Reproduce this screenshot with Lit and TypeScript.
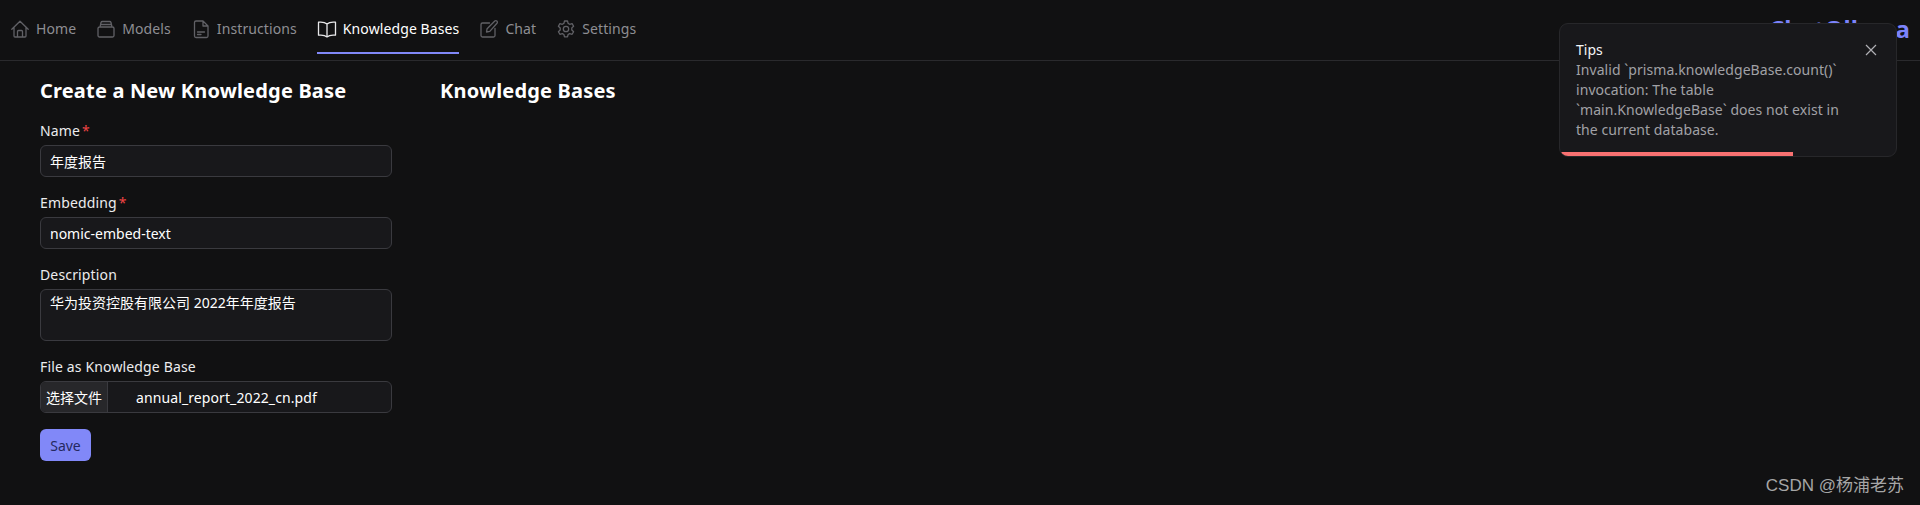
import { LitElement, html, css, svg } from "lit";
import { customElement } from "lit/decorators.js";

const icons: Record<string, unknown> = {
  home: svg`<path d="M1.800 10.200 10 2.200l8.200 8M4 8.300V17a1 1 0 0 0 1 1h10a1 1 0 0 0 1-1V8.300M7.500 18v-5.500a1 1 0 0 1 1-1h3a1 1 0 0 1 1 1V18" />`,
  models: svg`<path d="M3.500 8h13A1.500 1.500 0 0 1 18 9.500v7a1.500 1.500 0 0 1-1.500 1.500h-13A1.500 1.500 0 0 1 2 16.500v-7A1.500 1.500 0 0 1 3.500 8ZM4 8l1-4.500A1.500 1.500 0 0 1 6.500 2.500h7A1.500 1.500 0 0 1 15 3.500L16 8M4.500 5.500h11" />`,
  instructions: svg`<path d="M5 2h7l5 5v10a1.500 1.500 0 0 1-1.500 1.500h-10.500A1.500 1.500 0 0 1 3.500 17V3.500A1.500 1.500 0 0 1 5 2ZM12 2v5h5M6.500 13h7M6.500 15.500h3.500" />`,
  kb: svg`<path d="M10 5C8.300 3.500 5 2.800 1.500 3.200v13c3.500-.4 6.800.2 8.500 1.700 1.700-1.500 5-2.100 8.500-1.700v-13C15 2.800 11.700 3.500 10 5ZM10 5v12.900" />`,
  chat: svg`<path d="M10.500 4H3.500A1.500 1.500 0 0 0 2 5.500v11A1.500 1.500 0 0 0 3.500 18h11a1.500 1.500 0 0 0 1.500-1.500V9.500M7.500 13l.6-3.300L15.800 2a1.400 1.400 0 0 1 2 0l.2.200a1.400 1.400 0 0 1 0 2L10.800 12.400Z" />`,
  settings: svg`<path d="M8.500 2h3l.6 2.400 1.600.9 2.400-.7 1.500 2.600-1.800 1.700v2.100l1.800 1.700-1.500 2.600-2.400-.7-1.600.9-.6 2.400h-3l-.6-2.400-1.600-.9-2.400.7-1.500-2.600 1.800-1.700V9L2.400 7.200l1.500-2.600 2.400.7 1.600-.9Z" /><circle cx="10" cy="10" r="2.700" />`,
};

const tabs = [
  ["home", "Home"],
  ["models", "Models"],
  ["instructions", "Instructions"],
  ["kb", "Knowledge Bases"],
  ["chat", "Chat"],
  ["settings", "Settings"],
];

@customElement("app-root")
export class AppRoot extends LitElement {
  static styles = css`
    :host {
      display: block;
      position: relative;
      width: 1920px;
      height: 505px;
      overflow: hidden;
      background: #111112;
      color: #fff;
      font-family: "Noto Sans", "Noto Sans CJK SC", sans-serif;
      font-size: 14px;
    }
    .nav {
      display: flex;
      justify-content: space-between;
      height: 61px;
      box-sizing: border-box;
      border-bottom: 1px solid #2a2a2d;
      padding-left: 10px;
    }
    .tabs { display: flex; gap: 20px; }
    .tab {
      display: flex;
      align-items: center;
      gap: 6px;
      height: 54px;
      padding-top: 5px;
      box-sizing: border-box;
      color: #8e8e93;
      font-size: 14px;
      letter-spacing: 0.1px;
      white-space: nowrap;
      border-bottom: 2px solid transparent;
    }
    .tab.on {
      color: #fff;
      border-bottom-color: #8188f8;
    }
    .tab svg {
      width: 20px;
      height: 20px;
      fill: none;
      stroke: #616166;
      stroke-width: 1.300;
      stroke-linejoin: round;
      stroke-linecap: round;
      flex: none;
    }
    .tab.on svg { stroke: #e8e8ea; }
    .logo {
      color: #7c83fb;
      font-size: 24px;
      font-weight: 700;
      line-height: 60px;
      padding-right: 10px;
      margin-top: -1px;
    }
    .main {
      display: flex;
      gap: 48px;
      padding: 16px 40px 0;
    }
    .form { width: 352px; flex: none; }
    h2 {
      margin: 0 0 16px;
      font-size: 20px;
      line-height: 28px;
      font-weight: 700;
      letter-spacing: 0.18px;
      white-space: nowrap;
    }
    .field { margin-bottom: 16px; }
    label {
      display: block;
      font-size: 14px;
      line-height: 20px;
      margin-bottom: 4px;
      letter-spacing: 0.15px;
      color: #ececee;
    }
    .star { color: #ef4444; margin-left: 2px; }
    .box {
      height: 32px;
      box-sizing: border-box;
      border: 1px solid #3a3a3f;
      border-radius: 6px;
      background: #18181b;
      padding: 0 9px;
      display: flex;
      align-items: center;
      font-size: 14px;
      white-space: nowrap;
      overflow: hidden;
    }
    .area { height: 52px; align-items: flex-start; padding-top: 3px; line-height: 20px; }
    .file { padding: 0; }
    .pick {
      align-self: stretch;
      display: flex;
      align-items: center;
      justify-content: center;
      width: 67px;
      flex: none;
      box-sizing: border-box;
      background: #27272a;
      border-right: 1px solid #3a3a3f;
      font-size: 14px;
    }
    .fname { margin-left: 28px; letter-spacing: 0.1px; }
    .save {
      display: block;
      width: 51px;
      height: 32px;
      border: none;
      padding: 0;
      border-radius: 6px;
      background: #8188f8;
      color: #252860;
      font: inherit;
      font-size: 14px;
    }
    .toast {
      position: absolute;
      left: 1559px;
      top: 23px;
      width: 338px;
      height: 134px;
      box-sizing: border-box;
      background: #18181b;
      border: 1px solid #27272a;
      border-radius: 9px;
      padding: 16px 16px 0;
      overflow: hidden;
    }
    .toast .title { font-size: 14px; line-height: 20px; color: #f4f4f5; }
    .toast .msg {
      font-size: 14px;
      line-height: 20px;
      color: #a1a1a6;
      width: 282px;
      letter-spacing: 0.06px;
    }
    .close {
      position: absolute;
      right: 18px;
      top: 19px;
      width: 14px;
      height: 14px;
      fill: none;
      stroke: #b0b0b5;
      stroke-width: 1.200;
    }
    .bar {
      position: absolute;
      left: 0;
      bottom: 0;
      width: 233px;
      height: 4px;
      background: #f87171;
    }
    .wm {
      position: absolute;
      right: 16px;
      bottom: 9px;
      color: #a6a6a6;
      font-family: "Liberation Sans", "Noto Sans CJK SC", sans-serif;
      font-size: 17px;
      line-height: 20px;
    }
  `;

  render() {
    return html`
      <div class="nav">
        <div class="tabs">
          ${tabs.map(
            ([k, t]) => html`<div class="tab ${k === "kb" ? "on" : ""}">
              <svg viewBox="0 0 20 20">${icons[k]}</svg><span>${t}</span>
            </div>`
          )}
        </div>
        <div class="logo">ChatOllama</div>
      </div>
      <div class="main">
        <div class="form">
          <h2>Create a New Knowledge Base</h2>
          <div class="field">
            <label>Name<span class="star">*</span></label>
            <div class="box">年度报告</div>
          </div>
          <div class="field">
            <label>Embedding<span class="star">*</span></label>
            <div class="box">nomic-embed-text</div>
          </div>
          <div class="field">
            <label>Description</label>
            <div class="box area">华为投资控股有限公司 2022年年度报告</div>
          </div>
          <div class="field">
            <label>File as Knowledge Base</label>
            <div class="box file">
              <div class="pick">选择文件</div>
              <div class="fname">annual_report_2022_cn.pdf</div>
            </div>
          </div>
          <button class="save">Save</button>
        </div>
        <div><h2>Knowledge Bases</h2></div>
      </div>
      <div class="toast">
        <div class="title">Tips</div>
        <div class="msg">Invalid \`prisma.knowledgeBase.count()\` invocation: The table \`main.KnowledgeBase\` does not exist in the current database.</div>
        <svg class="close" viewBox="0 0 14 14"><path d="M2 2l10 10M12 2 2 12" /></svg>
        <div class="bar"></div>
      </div>
      <div class="wm">CSDN @杨浦老苏</div>
    `;
  }
}
